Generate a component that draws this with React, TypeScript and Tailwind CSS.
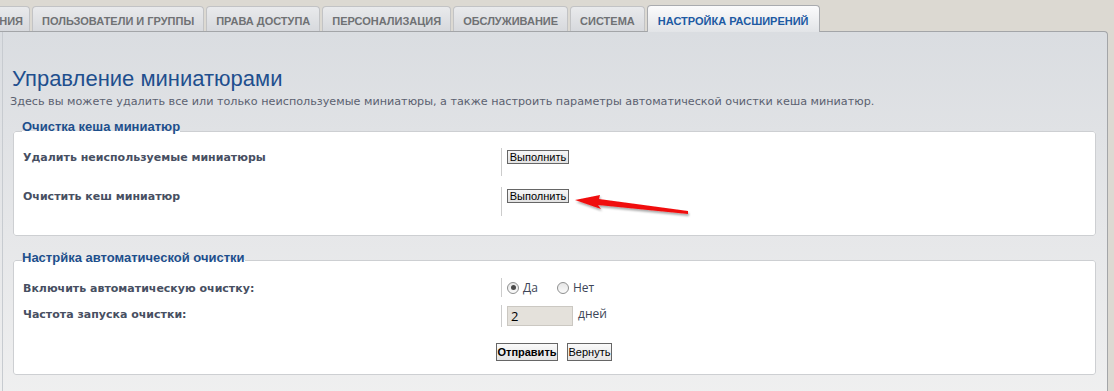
import React from "react";

const tabFont = { fontFamily: '"Liberation Sans", Arial, sans-serif' };

function Tab({ label, active = false }: { label: string; active?: boolean }) {
  return (
    <div
      className={
        active
          ? "relative z-10 h-[27px] -mb-px rounded-t-[4px] border border-b-0 border-[#a9abaf] bg-gradient-to-b from-[#fbfbfc] to-[#e2e4e7] px-[10px] pt-[7px] text-[11px] font-bold text-[#1d5aa3] whitespace-nowrap"
          : "h-[25px] mt-[1px] rounded-t-[4px] border border-b-0 border-[#c2c3c5] bg-gradient-to-b from-[#e9eaec] to-[#d7d9dd] px-[9px] pt-[6px] text-[11px] font-bold text-[#6f7174] whitespace-nowrap"
      }
      style={tabFont}
    >
      {label}
    </div>
  );
}

function Btn({ children, bold = false, w }: { children: React.ReactNode; bold?: boolean; w: string }) {
  return (
    <button
      className={
        "h-[18px] border border-[#666] bg-gradient-to-b from-[#fafafa] to-[#e4e4e4] px-0 text-center text-[11px] leading-none text-black " +
        (bold ? "font-bold " : "font-normal ") +
        w
      }
      style={{ fontFamily: '"Liberation Sans", Arial, sans-serif' }}
    >
      {children}
    </button>
  );
}

function SmallBtn({ children }: { children: React.ReactNode }) {
  return (
    <button
      className="h-[14px] w-[62px] border border-[#666] bg-gradient-to-b from-[#f6f6f6] to-[#e2e2e2] text-[11px] leading-none text-black"
      style={{ fontFamily: '"Liberation Sans", Arial, sans-serif' }}
    >
      {children}
    </button>
  );
}

const labelCls = "text-[11px] leading-[16px] font-bold text-[#474f62]";
const labelFont = { fontFamily: '"DejaVu Sans", Verdana, sans-serif' };
const legendCls = "relative -ml-[1px] px-0 text-[13px] leading-[14px] font-bold text-[#1d4f8c]";
const legendFont = { fontFamily: '"Liberation Sans", Arial, sans-serif' };

function Radio({ checked }: { checked?: boolean }) {
  return (
    <span className="flex h-[12px] w-[12px] items-center justify-center rounded-full border border-[#8e8f8f] bg-gradient-to-b from-[#e6e6e6] to-[#fafafa]">
      {checked && <span className="h-[5px] w-[5px] rounded-full bg-[#4a4a4a]" />}
    </span>
  );
}

export default function App() {
  return (
    <div className="relative h-[391px] w-[1114px] overflow-hidden bg-[#dcd9d2]">
      {/* tabs */}
      <div className="flex items-end gap-[2px] pt-[5px] pr-[6px]">
        <div
          className="mt-[1px] flex h-[25px] w-[30px] justify-end rounded-tr-[4px] border border-b-0 border-l-0 border-[#c2c3c5] bg-gradient-to-b from-[#e9eaec] to-[#d7d9dd] pr-[6px] pt-[6px] text-[11px] font-bold text-[#6f7174] whitespace-nowrap"
          style={tabFont}
        >
          НИЯ
        </div>
        <Tab label="ПОЛЬЗОВАТЕЛИ И ГРУППЫ" />
        <Tab label="ПРАВА ДОСТУПА" />
        <Tab label="ПЕРСОНАЛИЗАЦИЯ" />
        <Tab label="ОБСЛУЖИВАНИЕ" />
        <Tab label="СИСТЕМА" />
        <Tab label="НАСТРОЙКА РАСШИРЕНИЙ" active />
      </div>

      {/* main panel */}
      <div className="mr-[6px] h-[400px] rounded-tr-[4px] border-t border-r border-[#a3a5a8] bg-gradient-to-b from-[#dadde1] via-[#e6e7e9] to-[#f1f1f1]">
        <div className="ml-[2px] h-full border-l border-[#c7cbd0] pl-[9px] pr-[11px] pt-[33px]">
          <h1
            className="text-[22px] leading-[28px] font-normal text-[#1f4f8e]"
            style={{ fontFamily: '"Liberation Sans", Arial, sans-serif' }}
          >
            Управление миниатюрами
          </h1>
          <p
            className="-ml-[2px] mt-[1px] leading-[16px] text-[#5b6170]"
            style={{ fontFamily: '"DejaVu Sans", Verdana, sans-serif', fontSize: "11.2px" }}
          >
            Здесь вы можете удалить все или только неиспользуемые миниатюры, а также настроить параметры автоматической очистки кеша миниатюр.
          </p>

          {/* fieldset 1 */}
          <fieldset className="mt-[14px] ml-[1px] h-[112px] rounded-[3px] border border-[#cdcfd2] bg-white px-[9px]">
            <legend className={legendCls + " -top-[4px]"} style={legendFont}>
              Очистка кеша миниатюр
            </legend>
            <div className="mt-[10px] flex flex-col gap-[11px]">
              <div className="flex items-start">
                <div className={"w-[478px] pt-[2px] " + labelCls} style={labelFont}>
                  Удалить неиспользуемые миниатюры
                </div>
                <div className="flex h-[28px] items-start border-l border-[#cccccc] pl-[5px] pt-[2px]">
                  <SmallBtn>Выполнить</SmallBtn>
                </div>
              </div>
              <div className="flex items-start">
                <div className={"w-[478px] pt-[2px] " + labelCls} style={labelFont}>
                  Очистить кеш миниатюр
                </div>
                <div className="flex h-[29px] items-start border-l border-[#cccccc] pl-[5px] pt-[2px]">
                  <SmallBtn>Выполнить</SmallBtn>
                </div>
              </div>
            </div>
          </fieldset>

          {/* fieldset 2 */}
          <fieldset className="mt-[17px] ml-[1px] h-[122px] rounded-[3px] border border-[#cdcfd2] bg-white px-[9px]">
            <legend className={legendCls + " -top-[2px]"} style={legendFont}>
              Настрйка автоматической очистки
            </legend>
            <div className="mt-[11px] flex flex-col gap-[8px]">
              <div className="flex items-start">
                <div className={"w-[478px] pt-[3px] " + labelCls} style={labelFont}>
                  Включить автоматическую очистку:
                </div>
                <div
                  className="flex h-[19px] items-center border-l border-[#cccccc] pl-[5px] text-[12px] text-[#3d4557]"
                  style={{ fontFamily: '"Open Sans", sans-serif' }}
                >
                  <Radio checked />
                  <span className="ml-[4px]">Да</span>
                  <span className="ml-[19px]">
                    <Radio />
                  </span>
                  <span className="ml-[4px]">Нет</span>
                </div>
              </div>
              <div className="flex items-start">
                <div className={"w-[478px] pt-[2px] " + labelCls} style={labelFont}>
                  Частота запуска очистки:
                </div>
                <div
                  className="flex h-[22px] items-start border-l border-[#cccccc] pl-[5px] text-[12px] leading-[18px] text-[#3d4557]"
                  style={{ fontFamily: '"Open Sans", sans-serif' }}
                >
                  <div className="mt-[1px] flex h-[20px] w-[66px] items-center border border-[#cbc8c2] bg-[#e4e1db] pl-[3px] text-[13px] text-black">
                    2
                  </div>
                  <span className="ml-[5px]">дней</span>
                </div>
              </div>
            </div>
            <div className="mt-[16px] flex gap-[9px] pl-[473px]">
              <Btn bold w="w-[62px]">Отправить</Btn>
              <Btn w="w-[45px]">Вернуть</Btn>
            </div>
          </fieldset>
        </div>
      </div>

      {/* red arrow annotation */}
      <svg className="pointer-events-none absolute left-[570px] top-[190px]" width="125" height="30" viewBox="0 0 125 30">
        <defs>
          <filter id="sh" x="-10%" y="-50%" width="120%" height="200%">
            <feDropShadow dx="1" dy="2" stdDeviation="1.2" floodColor="#000" floodOpacity="0.35" />
          </filter>
        </defs>
        <polygon filter="url(#sh)" points="5,10 30,5 29,9 118,21 118,24 28,15 31,19" fill="#f01010" />
      </svg>
    </div>
  );
}
